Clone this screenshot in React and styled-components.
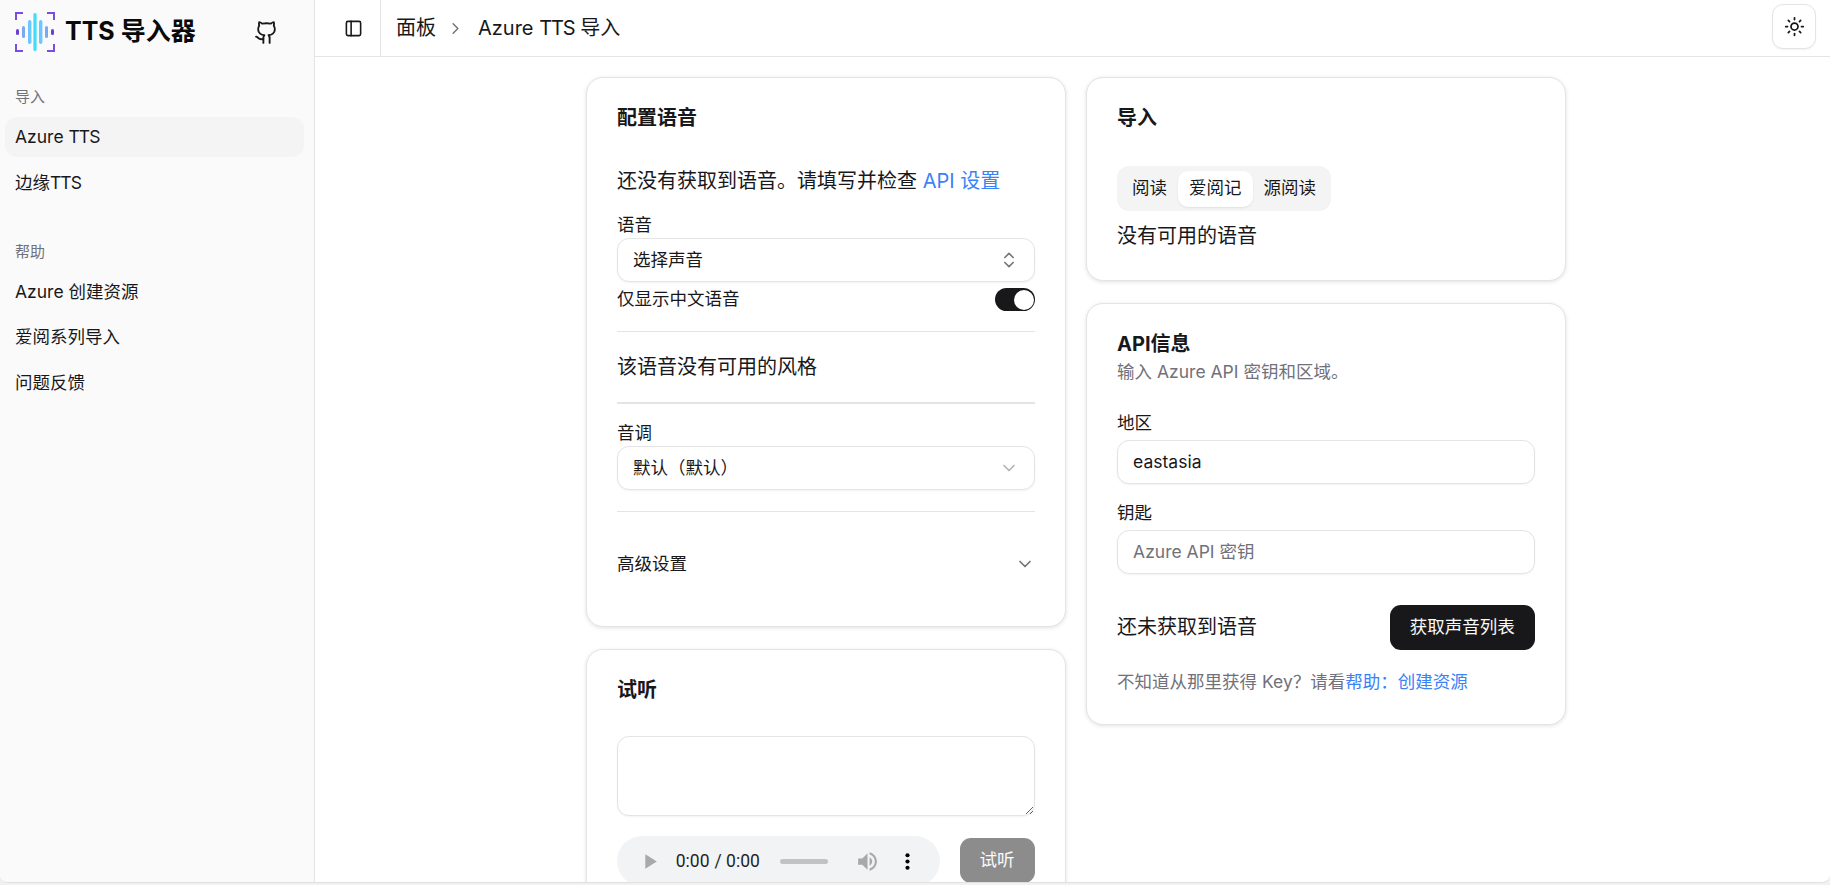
import React from 'react';
import styled, { createGlobalStyle } from 'styled-components';
import { ChevronDown, ChevronRight, ChevronsUpDown, Github, PanelLeft, Sun } from 'lucide-react';

const GlobalStyle = createGlobalStyle`
  * {
    box-sizing: border-box;
  }

  html,
  body {
    margin: 0;
    height: 100%;
    overflow: hidden;
    background: #f1f1f1;
    color: #18181b;
    font-family: Inter, "Noto Sans CJK SC", sans-serif;
    line-height: 1.5;
  }
`;

const Page = styled.div`
  height: 885px;
  overflow: hidden;
`;

const Shell = styled.div`
  display: flex;
  height: 883px;
  overflow: hidden;
  background: #fff;
  border-bottom: 1px solid #e0e0e0;
  border-radius: 0 0 8px 8px;
`;

const Sidebar = styled.aside`
  flex: none;
  width: 315px;
  padding: 12px 10px 0 5px;
  background: #fafafa;
  border-right: 1px solid #e4e4e7;
`;

const Brand = styled.div`
  display: flex;
  align-items: center;
  height: 40px;
  padding: 0 25px 0 10px;
`;

const BrandName = styled.span`
  margin-left: 10px;
  font-size: 25px;
  font-weight: 700;
  color: #0a0a0a;
  white-space: nowrap;
`;

const GithubLink = styled.a`
  display: flex;
  margin-left: auto;
  color: #18181b;
`;

const SectionLabel = styled.div`
  margin-top: ${(p) => p.$top}px;
  margin-bottom: 10px;
  padding-left: 10px;
  font-size: 15px;
  line-height: 20px;
  color: #71717a;
`;

const NavList = styled.nav`
  display: flex;
  flex-direction: column;
  gap: 5.5px;
`;

const NavItem = styled.a`
  display: block;
  height: 40px;
  padding-left: 10px;
  border-radius: 12px;
  font-size: 17.5px;
  line-height: 40px;
  background: ${(p) => (p.$active ? '#f4f4f5' : 'transparent')};
`;

const Caps = styled.span`
  letter-spacing: -0.055em;
`;

const Content = styled.div`
  display: flex;
  flex: 1;
  flex-direction: column;
  min-width: 0;
`;

const TopBar = styled.header`
  display: flex;
  flex: none;
  align-items: center;
  height: 57px;
  padding-right: 14px;
  border-bottom: 1px solid #e4e4e7;
`;

const ToggleCell = styled.div`
  display: flex;
  align-items: center;
  justify-content: center;
  width: 66px;
  height: 100%;
  padding-left: 11px;
  border-right: 1px solid #e4e4e7;
`;

const Crumbs = styled.div`
  display: flex;
  align-items: center;
  padding-left: 15px;
  font-size: 20px;
  white-space: nowrap;
`;

const CrumbArrow = styled(ChevronRight)`
  margin: 0 13px 0 10px;
  color: #71717a;
`;

const ThemeButton = styled.button`
  display: flex;
  align-items: center;
  justify-content: center;
  align-self: flex-start;
  width: 44px;
  height: 45px;
  margin: 4px 0 0 auto;
  padding: 0;
  color: #18181b;
  background: #fff;
  border: 1px solid #e4e4e7;
  border-radius: 11px;
  box-shadow: 0 1px 2px rgba(0, 0, 0, 0.05);
`;

const Main = styled.main`
  display: grid;
  flex: 1;
  grid-template-columns: 479.6px 479.6px;
  gap: 20.5px;
  align-items: start;
  min-height: 0;
  padding: 20px 0 0 271px;
  overflow: hidden;
`;

const Column = styled.div`
  display: flex;
  flex-direction: column;
  gap: 21.5px;
`;

const Card = styled.section`
  flex: none;
  padding: 30px;
  background: #fff;
  border: 1px solid #e4e4e7;
  border-radius: 17px;
  box-shadow: 0 1px 4px rgba(0, 0, 0, 0.12);
`;

const CardTitle = styled.h3`
  margin: 0;
  font-size: 20px;
  font-weight: 700;
  line-height: 21px;
`;

const Body = styled.div`
  margin-top: ${(p) => p.$top}px;
  font-size: 20px;
  line-height: 28px;
`;

const Link = styled.a`
  color: #3b82f6;
`;

const Label = styled.label`
  display: block;
  margin-top: ${(p) => p.$top}px;
  margin-bottom: ${(p) => p.$bottom}px;
  font-size: 17.5px;
  line-height: 20px;
`;

const Select = styled.button`
  display: flex;
  align-items: center;
  justify-content: space-between;
  width: 100%;
  height: 44px;
  padding: 0 15px;
  color: #18181b;
  font: inherit;
  font-size: 17.5px;
  background: #fff;
  border: 1px solid #e4e4e7;
  border-radius: 12px;
  box-shadow: 0 1px 2px rgba(0, 0, 0, 0.05);

  svg {
    color: ${(p) => (p.$muted ? '#b4b4b8' : '#77777c')};
  }
`;

const SwitchRow = styled.div`
  display: flex;
  align-items: center;
  justify-content: space-between;
  height: 23px;
  margin-top: 6px;
  font-size: 17.5px;
`;

const Switch = styled.span`
  display: flex;
  justify-content: flex-end;
  align-items: center;
  width: 40px;
  height: 23px;
  padding: 1px;
  background: #18181b;
  border-radius: 12px;
`;

const SwitchThumb = styled.span`
  width: 20px;
  height: 20px;
  background: #fff;
  border-radius: 50%;
`;

const Divider = styled.hr`
  height: ${(p) => p.$size || 1}px;
  margin: ${(p) => p.$top}px 0 0;
  background: #e4e4e7;
  border: 0;
`;

const Advanced = styled.div`
  display: flex;
  align-items: center;
  justify-content: space-between;
  height: 64px;
  margin-top: 20px;
  font-size: 17.5px;

  svg {
    color: #71717a;
  }
`;

const Note = styled.textarea`
  display: block;
  width: 100%;
  height: 80px;
  margin-top: 35px;
  padding: 10px 15px;
  font: inherit;
  background: #fff;
  border: 1px solid #e4e4e7;
  border-radius: 12px;
  box-shadow: 0 1px 2px rgba(0, 0, 0, 0.05);
  outline: none;
  resize: vertical;
`;

const PlayerRow = styled.div`
  display: flex;
  align-items: center;
  justify-content: space-between;
  margin-top: 20px;
`;

const Player = styled.audio`
  display: block;
  flex: none;
  width: 258.4px;
  height: 40px;
  zoom: 1.25;
`;

const Button = styled.button`
  flex: none;
  height: 45px;
  padding: 0 20px;
  color: #fafafa;
  font: inherit;
  font-size: 17.5px;
  background: ${(p) => (p.disabled ? '#8c8c8d' : '#18181b')};
  border: 0;
  border-radius: 11px;
`;

const Tabs = styled.div`
  display: flex;
  align-items: center;
  width: fit-content;
  height: 45px;
  margin-top: 37px;
  padding: 0 4px;
  background: #f4f4f5;
  border-radius: 12px;
`;

const Tab = styled.span`
  display: flex;
  align-items: center;
  height: 36px;
  padding: 0 11px;
  font-size: 17.5px;
  background: ${(p) => (p.$active ? '#fff' : 'transparent')};
  border-radius: 10px;
  box-shadow: ${(p) => (p.$active ? '0 1px 2px rgba(0, 0, 0, 0.08)' : 'none')};
`;

const Description = styled.p`
  margin: 7px 0 0;
  font-size: 17.5px;
  line-height: 20px;
  color: #71717a;
`;

const Input = styled.input`
  display: block;
  width: 100%;
  height: 44px;
  padding: 0 15px;
  color: #18181b;
  font: inherit;
  font-size: 17.5px;
  background: #fff;
  border: 1px solid #e4e4e7;
  border-radius: 12px;
  box-shadow: 0 1px 2px rgba(0, 0, 0, 0.05);
  outline: none;

  &::placeholder {
    color: #71717a;
  }
`;

const FetchRow = styled.div`
  display: flex;
  align-items: center;
  justify-content: space-between;
  margin-top: 31px;
  font-size: 20px;
`;

const Help = styled.p`
  margin: 20px 0 0;
  font-size: 17.5px;
  line-height: 24px;
  color: #71717a;
`;

const Logo = () => (
  <svg width="40" height="40" viewBox="0 0 40 40" fill="none" aria-hidden="true">
    <path d="M1 8V1h7M32 1h7v7M39 32v7h-7M8 39H1v-7" stroke="#7a4ddf" strokeWidth="2" />
    <rect x="1" y="17" width="3" height="6" rx="1.5" fill="#6a3fd8" />
    <rect x="7" y="14" width="3" height="12" rx="1.5" fill="#7ba8ee" />
    <rect x="13" y="8" width="3.4" height="24" rx="1.7" fill="#6cc6ff" />
    <rect x="18.4" y="1" width="3.2" height="38" rx="1.6" fill="#3edcff" />
    <rect x="24" y="8" width="3.4" height="24" rx="1.7" fill="#6cc6ff" />
    <rect x="30" y="14" width="3" height="12" rx="1.5" fill="#7ba8ee" />
    <rect x="36" y="17" width="3" height="6" rx="1.5" fill="#6a3fd8" />
  </svg>
);

export default function App() {
  return (
    <Page>
      <GlobalStyle />
      <Shell>
        <Sidebar>
          <Brand>
            <Logo />
            <BrandName>TTS 导入器</BrandName>
            <GithubLink>
              <Github size={25} strokeWidth={1.8} />
            </GithubLink>
          </Brand>
          <SectionLabel $top={35}>导入</SectionLabel>
          <NavList>
            <NavItem $active>Azure <Caps>TTS</Caps></NavItem>
            <NavItem>边缘<Caps>TTS</Caps></NavItem>
          </NavList>
          <SectionLabel $top={39}>帮助</SectionLabel>
          <NavList>
            <NavItem>Azure 创建资源</NavItem>
            <NavItem>爱阅系列导入</NavItem>
            <NavItem>问题反馈</NavItem>
          </NavList>
        </Sidebar>

        <Content>
          <TopBar>
            <ToggleCell>
              <PanelLeft size={19} strokeWidth={2} />
            </ToggleCell>
            <Crumbs>
              面板
              <CrumbArrow size={19} strokeWidth={1.8} />
              <span>Azure <Caps>TTS</Caps> 导入</span>
            </Crumbs>
            <ThemeButton>
              <Sun size={21} strokeWidth={2} />
            </ThemeButton>
          </TopBar>

          <Main>
            <Column>
              <Card>
                <CardTitle>配置语音</CardTitle>
                <Body $top={38}>
                  还没有获取到语音。请填写并检查 <Link>API 设置</Link>
                </Body>
                <Label $top={20} $bottom={3}>语音</Label>
                <Select>
                  选择声音
                  <ChevronsUpDown size={20} />
                </Select>
                <SwitchRow>
                  仅显示中文语音
                  <Switch>
                    <SwitchThumb />
                  </Switch>
                </SwitchRow>
                <Divider $top={20} />
                <Body $top={21}>该语音没有可用的风格</Body>
                <Divider $top={21} $size={2} />
                <Label $top={19} $bottom={3}>音调</Label>
                <Select $muted>
                  默认（默认）
                  <ChevronDown size={20} />
                </Select>
                <Divider $top={21} />
                <Advanced>
                  高级设置
                  <ChevronDown size={20} />
                </Advanced>
              </Card>

              <Card>
                <CardTitle>试听</CardTitle>
                <Note />
                <PlayerRow>
                  <Player controls />
                  <Button disabled>试听</Button>
                </PlayerRow>
              </Card>
            </Column>

            <Column>
              <Card>
                <CardTitle>导入</CardTitle>
                <Tabs>
                  <Tab>阅读</Tab>
                  <Tab $active>爱阅记</Tab>
                  <Tab>源阅读</Tab>
                </Tabs>
                <Body $top={11}>没有可用的语音</Body>
              </Card>

              <Card>
                <CardTitle>API信息</CardTitle>
                <Description>输入 Azure API 密钥和区域。</Description>
                <Label $top={31} $bottom={7}>地区</Label>
                <Input defaultValue="eastasia" />
                <Label $top={19} $bottom={7}>钥匙</Label>
                <Input placeholder="Azure API 密钥" />
                <FetchRow>
                  还未获取到语音
                  <Button>获取声音列表</Button>
                </FetchRow>
                <Help>
                  不知道从那里获得 Key？请看<Link>帮助：创建资源</Link>
                </Help>
              </Card>
            </Column>
          </Main>
        </Content>
      </Shell>
    </Page>
  );
}
